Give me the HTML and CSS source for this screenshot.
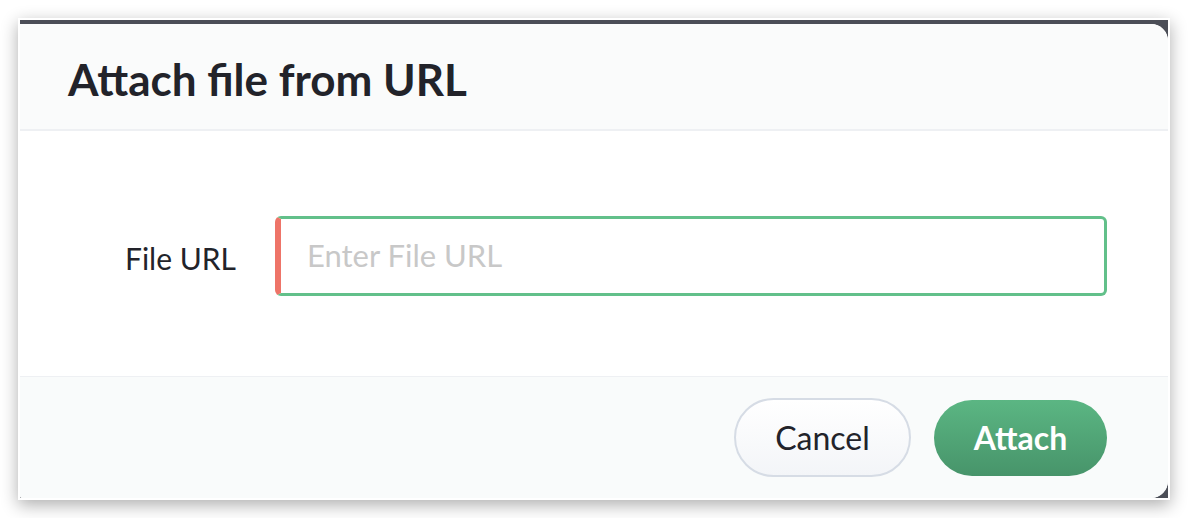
FILE: index.html
```html
<!DOCTYPE html>
<html lang="en">
<head>
<meta charset="utf-8">
<title>Attach file from URL</title>
<link rel="stylesheet" href="styles.css">
</head>
<body>
<div class="shot">
  <div class="window">
    <div class="dialog">
      <div class="dialog-header">
        <h1 class="dialog-title">Attach file from URL</h1>
      </div>
      <div class="dialog-body">
        <label class="field-label" for="file-url">File URL</label>
        <input class="field-input" id="file-url" type="text" placeholder="Enter File URL">
      </div>
      <div class="dialog-footer">
        <button class="btn btn-cancel" type="button">Cancel</button>
        <button class="btn btn-attach" type="button">Attach</button>
      </div>
    </div>
  </div>
</div>
</body>
</html>
```

FILE: styles.css
```css
html, body {
  margin: 0;
  padding: 0;
  background: #ffffff;
}

body {
  width: 1188px;
  height: 518px;
  overflow: hidden;
  font-family: Lato, "Open Sans", Arial, sans-serif;
  color: #22232a;
}

.shot {
  margin: 18px 0 0 18px;
  width: 1152px;
  height: 482px;
  padding: 2px;
  box-sizing: border-box;
  background: #ffffff;
  box-shadow: 0 5px 16px rgba(0, 0, 0, 0.32);
}

.window {
  height: 100%;
  padding-top: 4px;
  box-sizing: border-box;
  background: #4b4e57;
}

.dialog {
  height: 100%;
  display: flex;
  flex-direction: column;
  background: #ffffff;
  border-radius: 0 17px 17px 2px;
  overflow: hidden;
}

.dialog-header {
  height: 107px;
  flex: none;
  display: flex;
  align-items: center;
  padding: 4px 0 0 48px;
  box-sizing: border-box;
  background: #fafbfb;
  border-bottom: 2px solid #eef0f3;
}

.dialog-title {
  margin: 0;
  font-size: 44px;
  font-weight: 700;
  color: #22232a;
  letter-spacing: 0;
}

.dialog-body {
  flex: 1;
  display: flex;
  align-items: center;
  padding: 0 61px 0 105px;
  background: #ffffff;
  border-bottom: 1px solid #eef0f3;
}

.field-label {
  font-size: 30px;
  color: #22232a;
  margin: 8px 39px 0 0;
  white-space: nowrap;
}

.field-input {
  flex: 1;
  height: 80px;
  box-sizing: border-box;
  border: 3px solid #62c08a;
  border-left: 6px solid #ee7468;
  border-radius: 6px;
  padding: 0 0 2px 26px;
  font-family: inherit;
  font-size: 31px;
  color: #22232a;
  background: #ffffff;
  outline: none;
  margin-top: 4px;
}

.field-input::placeholder {
  color: #c8c8c8;
}

.dialog-footer {
  height: 121px;
  flex: none;
  display: flex;
  align-items: center;
  justify-content: flex-end;
  gap: 23px;
  padding-right: 61px;
  background: #f9fbfb;
}

.btn {
  font-family: inherit;
  font-size: 32px;
  border-radius: 40px;
  cursor: pointer;
  box-sizing: border-box;
}

.btn-cancel {
  width: 177px;
  height: 79px;
  border: 2px solid #d6dce5;
  background: linear-gradient(#ffffff, #f3f5f8);
  color: #22232a;
}

.btn-attach {
  width: 173px;
  height: 76px;
  border: none;
  background: linear-gradient(#5bb683, #47946a);
  color: #ffffff;
  font-weight: 700;
}
```
